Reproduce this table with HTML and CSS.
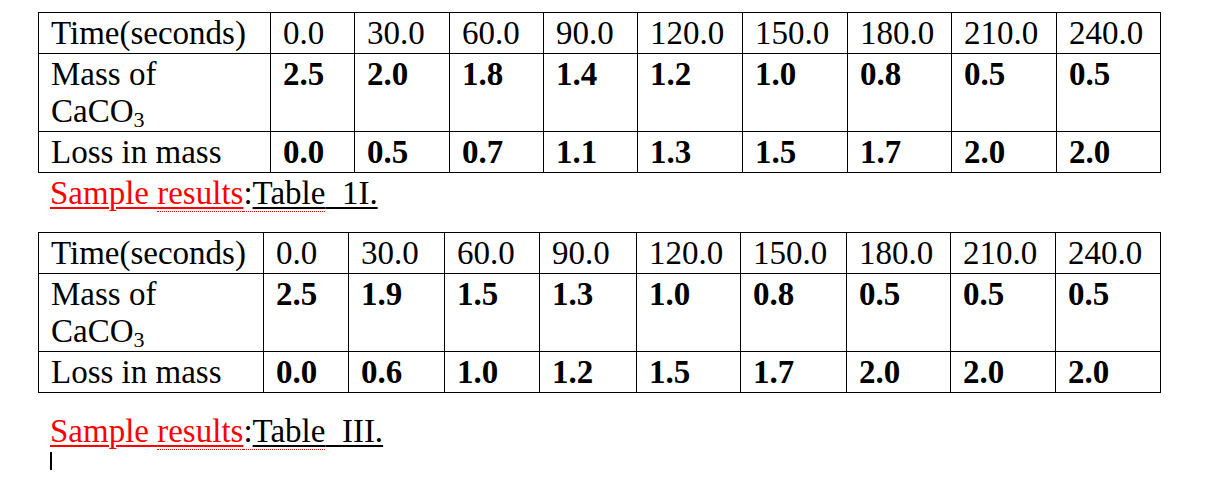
FILE: index.html
```html
<!DOCTYPE html>
<html lang="en">

<head>
    <meta charset="UTF-8">
    <title>Sample results</title>
    <link rel="stylesheet" href="styles.css">
</head>

<body>

    <!-- Table 1I -->
    <table class="results">
        <colgroup>
            <col width="232"><col width="84"><col width="95"><col width="94"><col width="94">
            <col width="105"><col width="105"><col width="104"><col width="105"><col width="104">
        </colgroup>
        <tr class="head">
            <td>Time(seconds)</td>
            <td>0.0</td><td>30.0</td><td>60.0</td><td>90.0</td><td>120.0</td>
            <td>150.0</td><td>180.0</td><td>210.0</td><td>240.0</td>
        </tr>
        <tr class="val">
            <td>Mass of<br>CaCO<sub>3</sub></td>
            <td>2.5</td><td>2.0</td><td>1.8</td><td>1.4</td><td>1.2</td>
            <td>1.0</td><td>0.8</td><td>0.5</td><td>0.5</td>
        </tr>
        <tr class="val">
            <td>Loss in mass</td>
            <td>0.0</td><td>0.5</td><td>0.7</td><td>1.1</td><td>1.3</td>
            <td>1.5</td><td>1.7</td><td>2.0</td><td>2.0</td>
        </tr>
    </table>
    <p class="caption">
        <span class="link">Sample <span class="spell">results</span></span><span class="spell">:<span class="title">Table</span></span><span class="title">&nbsp; 1I.</span>
    </p>

    <!-- Table III -->
    <table class="results second">
        <colgroup>
            <col width="225"><col width="85"><col width="96"><col width="95"><col width="97">
            <col width="104"><col width="106"><col width="104"><col width="105"><col width="105">
        </colgroup>
        <tr class="head">
            <td>Time(seconds)</td>
            <td>0.0</td><td>30.0</td><td>60.0</td><td>90.0</td><td>120.0</td>
            <td>150.0</td><td>180.0</td><td>210.0</td><td>240.0</td>
        </tr>
        <tr class="val">
            <td>Mass of<br>CaCO<sub>3</sub></td>
            <td>2.5</td><td>1.9</td><td>1.5</td><td>1.3</td><td>1.0</td>
            <td>0.8</td><td>0.5</td><td>0.5</td><td>0.5</td>
        </tr>
        <tr class="val">
            <td>Loss in mass</td>
            <td>0.0</td><td>0.6</td><td>1.0</td><td>1.2</td><td>1.5</td>
            <td>1.7</td><td>2.0</td><td>2.0</td><td>2.0</td>
        </tr>
    </table>
    <p class="caption last">
        <span class="link">Sample <span class="spell">results</span></span><span class="spell">:<span class="title">Table</span></span><span class="title">&nbsp; III.</span>
    </p>
    <p class="empty"><span class="cursor"></span></p>

</body>

</html>
```

FILE: styles.css
```css
body {
    margin: 0;
    padding: 12px 0 0 38px;
    font-family: 'Liberation Serif', 'Times New Roman', serif;
    font-size: 33px;
    line-height: 37px;
    color: #000;
    background: #fff;
}

.results {
    border-collapse: collapse;
    table-layout: fixed;
    width: 1123px;
}

.results td {
    border: 1px solid #000;
    padding: 2px 12px 1px 12px;
    vertical-align: top;
}

.val td {
    font-weight: bold;
}

.val td:first-child {
    font-weight: normal;
}

.head td:first-child {
    white-space: nowrap;
}

sub {
    font-size: 22px;
    line-height: 0;
    vertical-align: -5px;
}

.second {
    margin-top: 20px;
}

.caption {
    margin: 0;
    padding: 2px 0 0 12px;
}

.caption.last {
    margin-top: 18px;
}

.link {
    color: #ff0000;
    text-decoration: underline;
    text-decoration-color: #ff0000;
    text-decoration-thickness: 2px;
    text-underline-offset: 3px;
}

.title {
    color: #000;
    text-decoration: underline;
    text-decoration-color: #000;
    text-decoration-thickness: 2px;
    text-underline-offset: 3px;
}

.spell {
    border-bottom: 1px dotted #ff0000;
}

.empty {
    margin: 0;
    padding: 2px 0 0 12px;
    height: 37px;
}

.cursor {
    display: block;
    width: 2px;
    height: 18px;
    background: #000;
}
```
